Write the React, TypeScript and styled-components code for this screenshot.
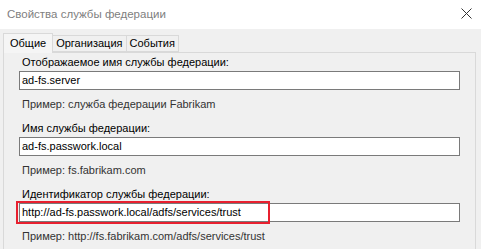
import * as React from 'react'
import styled, { createGlobalStyle } from 'styled-components'

const GlobalStyle = createGlobalStyle`
  html, body {
    margin: 0;
    padding: 0;
    background: #fff;
  }
  * {
    box-sizing: border-box;
  }
`

const SWindow = styled.div`
  width: 481px;
  height: 249px;
  overflow: hidden;
  display: flex;
  flex-direction: column;
  font-family: 'Liberation Sans', Arial, sans-serif;
  font-size: 11px;
  color: #000;
`
const STitleBar = styled.div`
  height: 29px;
  flex: none;
  display: flex;
  align-items: center;
  justify-content: space-between;
  padding: 0 9px 2px 7px;
  background: #fff;
  color: #808080;
  font-size: 11.5px;
`
const SCloseIcon = styled.svg`
  width: 11px;
  height: 11px;
`
const SBody = styled.div`
  flex: 1;
  background: #f0f0f0;
  padding: 4px 5px 0 3px;
  display: flex;
  flex-direction: column;
`
const STabRow = styled.div`
  display: flex;
  align-items: flex-end;
  height: 19px;
  flex: none;
`
const STab = styled.div<{ active?: boolean }>`
  height: ${(p) => (p.active ? '20px' : '17px')};
  padding: 0 ${(p) => (p.active ? '6px' : '3px')};
  margin-left: ${(p) => (p.active ? '0' : '-1px')};
  margin-bottom: ${(p) => (p.active ? '-1px' : '0')};
  border: 1px solid #d9d9d9;
  border-bottom: ${(p) => (p.active ? 'none' : '1px solid #d9d9d9')};
  background: ${(p) => (p.active ? '#f5f5f5' : '#f0f0f0')};
  display: flex;
  align-items: center;
  position: relative;
  z-index: ${(p) => (p.active ? 1 : 0)};
  line-height: 1;
  font-size: 11px;
`
const SPanel = styled.div`
  flex: 1;
  border: 1px solid #d9d9d9;
  border-bottom: none;
  padding: 2px 15px 0 15px;
  display: flex;
  flex-direction: column;
`
const SField = styled.div`
  display: flex;
  flex-direction: column;
  margin-bottom: 9px;
`
const SLabel = styled.div`
  padding-left: 3px;
  height: 15px;
  line-height: 15px;
  white-space: nowrap;
`
const SInputWrap = styled.div`
  position: relative;
  margin-top: 1px;
`
const SInput = styled.div`
  height: 19px;
  border: 1px solid #7a7a7a;
  background: #fff;
  padding: 0 2px;
  line-height: 17px;
  white-space: nowrap;
`
const SHighlight = styled.div`
  position: absolute;
  left: -3px;
  top: -2px;
  width: 254px;
  height: 23px;
  border: 2px solid #e8202f;
  pointer-events: none;
`
const SHint = styled.div`
  padding-left: 3px;
  margin-top: 7px;
  color: #333;
  height: 15px;
  line-height: 15px;
  white-space: nowrap;
`

const fields = [
  {
    label: 'Отображаемое имя службы федерации:',
    value: 'ad-fs.server',
    hint: 'Пример: служба федерации Fabrikam',
  },
  {
    label: 'Имя службы федерации:',
    value: 'ad-fs.passwork.local',
    hint: 'Пример: fs.fabrikam.com',
  },
  {
    label: 'Идентификатор службы федерации:',
    value: 'http://ad-fs.passwork.local/adfs/services/trust',
    hint: 'Пример: http://fs.fabrikam.com/adfs/services/trust',
    marked: true,
  },
]

const App = () => {
  return (
    <>
      <GlobalStyle />
      <SWindow>
        <STitleBar>
          <span>Свойства службы федерации</span>
          <SCloseIcon viewBox="0 0 11 11">
            <path d="M0.5 0.5L10.5 10.5M10.5 0.5L0.5 10.5" stroke="#333" strokeWidth="1" />
          </SCloseIcon>
        </STitleBar>
        <SBody>
          <STabRow>
            <STab active>Общие</STab>
            <STab>Организация</STab>
            <STab>События</STab>
          </STabRow>
          <SPanel>
            {fields.map((f) => (
              <SField key={f.label}>
                <SLabel>{f.label}</SLabel>
                <SInputWrap>
                  <SInput>{f.value}</SInput>
                  {f.marked && <SHighlight />}
                </SInputWrap>
                <SHint>{f.hint}</SHint>
              </SField>
            ))}
          </SPanel>
        </SBody>
      </SWindow>
    </>
  )
}
export default App
